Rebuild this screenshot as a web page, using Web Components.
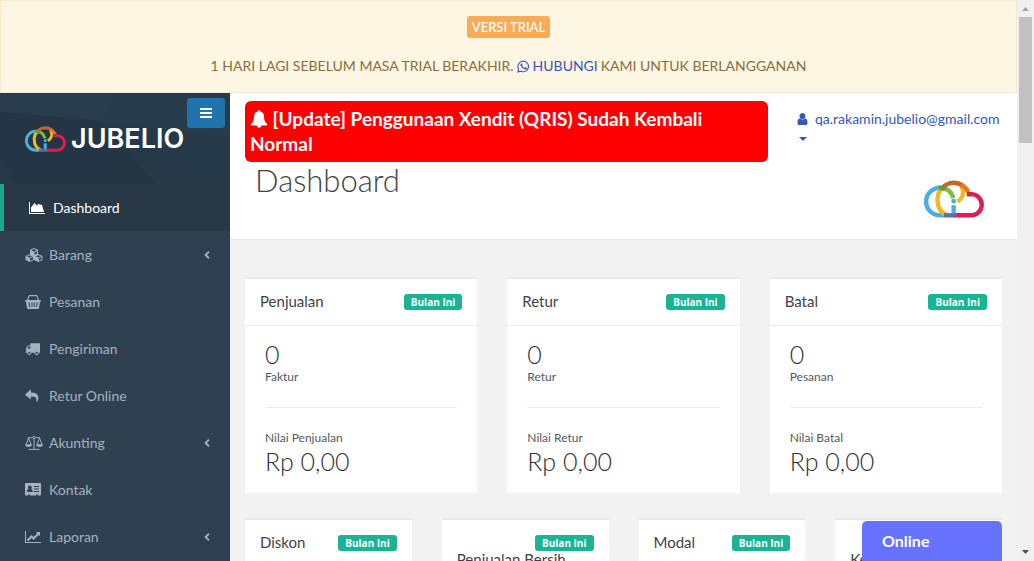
<!DOCTYPE html>
<html lang="id">
<head>
<meta charset="utf-8">
<meta name="viewport" content="width=device-width, initial-scale=1">
<title>Dashboard - Jubelio</title>
<style>
  html, body { margin: 0; height: 100%; overflow: hidden; }
  body { font: 14px/20px Lato, "Open Sans", sans-serif; color: #3f4245; background: #f2f2f2; }
</style>
</head>
<body>
<jb-app>
  <jb-trial-banner slot="banner"></jb-trial-banner>
  <jb-sidebar slot="sidebar">
    <jb-nav-item icon="area" active>Dashboard</jb-nav-item>
    <jb-nav-item icon="cubes" expandable>Barang</jb-nav-item>
    <jb-nav-item icon="basket">Pesanan</jb-nav-item>
    <jb-nav-item icon="truck">Pengiriman</jb-nav-item>
    <jb-nav-item icon="reply">Retur Online</jb-nav-item>
    <jb-nav-item icon="balance" expandable>Akunting</jb-nav-item>
    <jb-nav-item icon="card">Kontak</jb-nav-item>
    <jb-nav-item icon="line" expandable>Laporan</jb-nav-item>
  </jb-sidebar>
  <jb-page-header>Dashboard</jb-page-header>
  <jb-card-row columns="3">
    <jb-stat-card heading="Penjualan" count="0" unit="Faktur" label="Nilai Penjualan" amount="Rp 0,00"></jb-stat-card>
    <jb-stat-card heading="Retur" count="0" unit="Retur" label="Nilai Retur" amount="Rp 0,00"></jb-stat-card>
    <jb-stat-card heading="Batal" count="0" unit="Pesanan" label="Nilai Batal" amount="Rp 0,00"></jb-stat-card>
  </jb-card-row>
  <jb-card-row columns="4">
    <jb-stat-card heading="Diskon"></jb-stat-card>
    <jb-stat-card heading="Penjualan Bersih"></jb-stat-card>
    <jb-stat-card heading="Modal"></jb-stat-card>
    <jb-stat-card heading="Keuntungan Kotor"></jb-stat-card>
  </jb-card-row>
  <jb-scrollbar slot="scrollbar"></jb-scrollbar>
  <jb-chat slot="chat">Online</jb-chat>
</jb-app>

<script>
const ICONS = {
  area: ['0 0 2048 1792', '<path d="M2048 1536v128H0V128h128v1408h1920zM1664 512l256 896H256V832l448-576 320 320 192-192z"/>'],
  line: ['0 0 2048 1792', '<path d="M2048 1536v128H0V128h128v1408h1920zm-128-1248v435q0 21-19.5 29.5t-35.5-7.5l-121-121-633 633q-10 10-23 10t-23-10l-233-233-416 416-192-192 585-585q10-10 23-10t23 10l233 233 464-464-121-121q-16-16-7.5-35.5t29.5-19.5h435q14 0 23 9t9 23z"/>'],
  truck: ['0 0 1792 1792', '<path d="M640 1408q0-52-38-90t-90-38-90 38-38 90 38 90 90 38 90-38 38-90zm-384-512h384v-256h-158q-13 0-22 9l-195 195q-9 9-9 22v30zm1280 512q0-52-38-90t-90-38-90 38-38 90 38 90 90 38 90-38 38-90zm256-1088v1024q0 15-4 26.5t-13.5 18.5-16.5 11.5-23.5 6-22.5 2-25.5 0-22.5-.5q0 106-75 181t-181 75-181-75-75-181h-384q0 106-75 181t-181 75-181-75-75-181h-64q-3 0-22.5.5t-25.5 0-22.5-2-23.5-6-16.5-11.5-13.5-18.5-4-26.5q0-26 19-45t45-19v-320q0-8-.5-35t0-38 2.5-34.5 6.5-37 14-30.5 22.5-30l198-198q19-19 50.5-32t58.5-13h160v-192q0-26 19-45t45-19h1024q26 0 45 19t19 45z"/>'],
  user: ['200 150 1400 1600', '<path d="M1536 1399q0 109-62.500 187t-150.500 78h-854q-88 0-150.500-78t-62.500-187q0-85 8.500-160.500t31.500-152 58.500-131 94-89 134.500-34.500q131 128 313 128t313-128q76 0 134.500 34.500t94 89 58.500 131 31.500 152 8.500 160.500zm-256-887q0 159-112.500 271.500t-271.500 112.500-271.500-112.500-112.500-271.500 112.500-271.500 271.500-112.500 271.500 112.500 112.500 271.500z"/>'],
  reply: ['0 0 16 14', '<path d="M0.200 5.300 5.600.400Q6.300 0 6.300.900V3.200Q14 3 14.300 8.500 14.300 11 12.800 13.500 12.300 13.900 12.300 13.200 12.600 9 10.700 8.100 9.200 7.500 6.300 7.600V10Q6.300 10.800 5.600 10.300L.200 6Q-.100 5.600.200 5.300Z"/>'],
  cubes: ['0 0 18 14', '<path fill-rule="evenodd" d="M9 0 13 1.700V6L17.500 8V12L13.400 14 9 12 4.600 14 .500 12V8L5 6V1.700ZM9 1 6.300 2.200 9 3.400 11.700 2.200ZM9.500 4.300V6.700L12 5.600V3.200ZM4.500 7.200 2 8.300 4.500 9.400 7 8.300ZM5.100 10.300V12.800L8 11.500V9ZM13.400 7.200 10.800 8.300 13.400 9.400 16 8.300ZM13.900 10.300V12.800L16.500 11.500V9Z"/>'],
  basket: ['0 0 16 14', '<path fill-rule="evenodd" d="M2 5 3.300 1.200Q3.700 0 5 0H11Q12.300 0 12.700 1.200L14 5H15.200Q16 5 16 5.900T15.200 6.700H15L14 13.100Q13.900 14 13 14H3Q2.100 14 2 13.100L1 6.700H.800Q0 6.700 0 5.900T.800 5ZM3.300 5H12.700L11.700 1.600Q11.600 1.200 11 1.200H5Q4.400 1.200 4.300 1.600ZM3.600 7.500 4 12H5L4.600 7.500ZM6.500 7.500V12H7.500V7.500ZM8.800 7.500V12H9.800V7.500ZM11.500 7.500 11.200 12H12.200L12.600 7.500Z"/>'],
  balance: ['0 0 18 14', '<path fill="none" stroke="currentColor" stroke-width="1" d="M3 1.700H7.500M10.500 1.700H15M9 3V13M3.500 13.400H14.500M3.500 2 1 8.500M3.500 2 6 8.500M14.500 2 12 8.500M14.500 2 17 8.500"/><circle cx="9" cy="1.500" r="1.200" fill="none" stroke="currentColor"/><path d="M0 8.300H7Q6.700 10.900 3.500 10.900T0 8.300ZM11 8.300H18Q17.700 10.900 14.500 10.900T11 8.300Z"/>'],
  card: ['0 0 16 13', '<path fill-rule="evenodd" d="M1 0H15Q16 0 16 1V11.500Q16 12.500 15 12.500H13V11.500H11V12.500H5V11.500H3V12.500H1Q0 12.500 0 11.500V1Q0 0 1 0ZM4.800 2.500A1.900 2 0 0 0 3.500 5.900Q2 6.300 2 8.300V9H7.700V8.300Q7.700 6.300 6.200 5.900A1.900 2 0 0 0 4.800 2.500ZM9 3V4H14V3ZM9 5.500V6.500H14V5.500ZM9 8V9H14V8Z"/>'],
  bell: ['0 0 18 18', '<path d="M9 0Q10.200 0 10.200 1.500 14 2.200 14 7 14 12 17.500 14.200 17 15.500 16 15.500H11.300A2.300 2.300 0 0 1 6.700 15.500H2Q1 15.500.500 14.200 4 12 4 7 4 2.200 7.800 1.500 7.800 0 9 0Z"/>'],
  whatsapp: ['0 0 14 14', '<path fill="none" stroke="currentColor" stroke-width="1.200" stroke-linejoin="round" d="M1 13 1.800 9.900A5.700 5.700 0 1 1 4.200 12.100Z"/><path d="M4.600 3.700Q5.300 3.400 5.500 4L6 5.200Q6.100 5.600 5.500 6.200 6.300 7.800 8 8.500L8.700 7.700Q9 7.500 10.400 8.300 10.900 8.500 10.300 9.500 9.500 10.400 8.200 10 5 9 3.900 6.200 3.400 4.600 4.600 3.700Z"/>'],
  left: ['0 0 6 8', '<path fill="none" stroke="currentColor" stroke-width="1.800" d="M5 .700 1.600 4 5 7.300"/>'],
  bars: ['0 0 12 10', '<path d="M0 0H12V2H0ZM0 4H12V6H0ZM0 8H12V10H0Z"/>'],
  caret: ['0 0 8 4', '<path d="M0 0H8L4 4Z"/>'],
  up: ['0 0 7 4', '<path d="M0 4H7L3.500 0Z"/>'],
  down: ['0 0 7 4', '<path d="M0 0H7L3.500 4Z"/>'],
  cloud: ['434 270 178 113', `<g fill="none" stroke-width="13">
    <path stroke="#4baee2" d="M481 293A41 41 0 0 0 481 375H495"/>
    <path stroke="#ecbb20" d="M489 293Q474 306 474 328 474 364 503 375M545 289Q553 302 549 315 545 328 533 334"/>
    <path stroke="#7fbd42" d="M481 293Q513 294 521 324"/>
    <path stroke="#c4652c" d="M486 296Q500 279 522 278 537 278 549 287"/>
    <path stroke="#e4752a" d="M543 283Q559 292 566 306"/>
    <path stroke="#6d953b" d="M478 293Q491 293 497 298"/>
    <path stroke="#e01b57" d="M562 312H574A31.500 31.500 0 0 1 574 375H522"/>
    <path stroke="#4baee2" d="M522 345V375"/>
    <path stroke="#5a73a7" d="M493 375H528"/>
    <path stroke="#cf2730" d="M561 312H574"/></g>
    <circle cx="522" cy="333" r="7" fill="#4baee2"/>`]
};

const icon = (name, w, h) => {
  const [box, body] = ICONS[name];
  return `<svg aria-hidden="true" viewBox="${box}" width="${w}" height="${h}" fill="currentColor">${body}</svg>`;
};

class JbElement extends HTMLElement {
  connectedCallback() {
    if (this.shadowRoot) return;
    const tpl = document.createElement('template');
    tpl.innerHTML = `<style>:host,*{box-sizing:border-box}svg{display:block;flex:none}a{text-decoration:none}</style>` + this.render();
    this.attachShadow({ mode: 'open' }).append(tpl.content.cloneNode(true));
  }
}

customElements.define('jb-app', class extends JbElement {
  render() {
    return `<style>
      :host { display: grid; grid-template-columns: minmax(0, 1fr) auto; height: 100vh; overflow: hidden; }
      .view { overflow: hidden; }
      .body { display: grid; grid-template-columns: 230px minmax(0, 1fr); }
      main { padding-bottom: 40px; }
    </style>
    <div class="view">
      <slot name="banner"></slot>
      <div class="body"><slot name="sidebar"></slot><main><slot></slot></main></div>
    </div>
    <slot name="scrollbar"></slot><slot name="chat"></slot>`;
  }
});

customElements.define('jb-trial-banner', class extends JbElement {
  render() {
    return `<style>
      :host { display: flex; flex-direction: column; align-items: center; gap: 18px; padding: 15px 15px 16px;
        background: #fdf6e3; border: 1px solid #fbe8cc; color: #8a6d3b; }
      .tag { background: #f8ac59; color: #fff; border-radius: 3px; padding: 1px 5px; font-size: 13px; font-weight: 500; }
      p { margin: 0; display: flex; align-items: center; gap: 3px; white-space: nowrap; }
      a { color: #3557b7; display: inline-flex; align-items: center; gap: 3px; }
    </style>
    <span class="tag">VERSI TRIAL</span>
    <p>1 HARI LAGI SEBELUM MASA TRIAL BERAKHIR. <a href="#hubungi">${icon('whatsapp', 13, 13)}HUBUNGI</a> KAMI UNTUK BERLANGGANAN</p>`;
  }
});

customElements.define('jb-logo', class extends JbElement {
  render() {
    return `<style>
      :host { display: flex; align-items: center; gap: 5px; color: #fff; font: 600 27px/28px Inter, sans-serif; }
    </style>${icon('cloud', 41, 26)}<span>JUBELIO</span>`;
  }
});

customElements.define('jb-sidebar', class extends JbElement {
  render() {
    return `<style>
      :host { display: block; background: #2f4050; }
      header { position: relative; height: 91px; padding: 32px 25px 0; background: #263949; }
      .facets { position: absolute; inset: 0; width: 100%; height: 100%; }
      jb-logo { position: relative; }
      button { position: absolute; top: 5px; right: 5px; width: 38px; height: 30px; padding: 0; border: 0; border-radius: 3px;
        background: #2173ae; color: #fff; display: grid; place-items: center; }
      nav { display: block; }
    </style>
    <header>
      <svg class="facets" viewBox="0 0 230 91" preserveAspectRatio="none" aria-hidden="true">
        <path fill="#293c4b" d="M0 0H120L100 28 0 19Z"/><path fill="#243646" d="M0 19 100 28 15 91 0 62Z"/>
        <path fill="#283b4a" d="M120 0H230V45L100 28Z"/><path fill="#233646" d="M100 28 156 91H15Z"/><path fill="#273947" d="M218 91 220 40 230 45V91Z"/>
      </svg>
      <jb-logo></jb-logo>
      <button type="button" aria-label="Menu">${icon('bars', 12, 10)}</button>
    </header>
    <nav><slot></slot></nav>`;
  }
});

customElements.define('jb-nav-item', class extends JbElement {
  render() {
    const sizes = { area: [16, 14], line: [16, 14], truck: [15, 15], reply: [15, 14], cubes: [18, 14], basket: [16, 14], balance: [18, 14], card: [16, 13] };
    const name = this.getAttribute('icon');
    return `<style>
      :host { display: block; color: #a7b1c2; }
      :host([active]) { color: #fff; background: #293846; border-left: 4px solid #19aa8d; }
      a { display: flex; align-items: center; height: 47px; padding: 0 20px 0 25px; color: inherit; font-size: 14px; }
      i { flex: none; width: 24px; }
      .text { flex: 1; }
    </style>
    <a href="#"><i>${icon(name, ...sizes[name])}</i><span class="text"><slot></slot></span>${this.hasAttribute('expandable') ? icon('left', 6, 8) : ''}</a>`;
  }
});

customElements.define('jb-page-header', class extends JbElement {
  render() {
    return `<style>
      :host { display: flex; justify-content: space-between; padding: 8px 15px 0; height: 147px; background: #fff; border-bottom: 1px solid #e7eaec; }
      .left { flex: 0 1 523px; }
      .alert { display: block; padding: 5px; min-height: 61px; border-radius: 6px; background: #f00; color: #fff; font-size: 19px; line-height: 25px; font-weight: 700; }
      .alert svg { display: inline-block; vertical-align: -2px; }
      h2 { margin: 0 0 0 10px; font-size: 31px; line-height: 36px; font-weight: 300; color: #3f4245; }
      .right { flex: 0 0 205px; display: flex; flex-direction: column; align-items: flex-start; padding-top: 8px; }
      .account { display: grid; grid-template-columns: 18px auto; row-gap: 8px; align-items: center; color: #3557b7; }
      .cloud { align-self: flex-end; margin: 39px 18px 0 0; }
    </style>
    <div class="left">
      <div class="alert" role="alert">${icon('bell', 18, 18)} [Update] Penggunaan Xendit (QRIS) Sudah Kembali Normal</div>
      <h2><slot></slot></h2>
    </div>
    <div class="right">
      <a class="account" href="#akun">${icon('user', 11, 13)}<span>qa.rakamin.jubelio@gmail.com</span>${icon('caret', 12, 4)}</a>
      <div class="cloud">${icon('cloud', 60, 38)}</div>
    </div>`;
  }
});

customElements.define('jb-card-row', class extends JbElement {
  render() {
    return `<style>
      :host { display: grid; grid-template-columns: repeat(${this.getAttribute('columns')}, minmax(0, 1fr)); gap: 30px; padding: 0 15px; margin-top: 25px; }
      :host([columns="3"]) { margin-top: 37px; }
    </style><slot></slot>`;
  }
});

customElements.define('jb-stat-card', class extends JbElement {
  render() {
    const a = n => this.getAttribute(n) || '';
    const body = this.hasAttribute('amount') ? `<div class="body">
      <strong>${a('count')}</strong><small>${a('unit')}</small><hr><small>${a('label')}</small><strong>${a('amount')}</strong></div>` : '';
    return `<style>
      :host { display: block; background: #fff; border-top: 2px solid #e7eaec; }
      header { min-height: 47px; padding: 14px 15px; border-bottom: 1px solid #e7eaec; }
      header::after { content: ""; display: block; clear: both; }
      h5 { margin: 0; font-size: 15px; line-height: 16px; font-weight: 400; float: left; }
      .badge { float: right; margin-top: 1px; padding: 0 7px; height: 16px; border-radius: 3px; background: #1ab394; color: #fff;
        font: 700 10px/17px "Open Sans", sans-serif; }
      .body { padding: 15px 20px 19px; }
      strong { display: block; font-size: 25px; line-height: 26px; font-weight: 300; color: #2f3235; }
      small { display: block; font-size: 12px; line-height: 20px; color: #55585b; }
      hr { margin: 20px 0; border: 0; border-top: 1px solid #eee; }
    </style>
    <header><span class="badge">Bulan Ini</span><h5>${a('heading')}</h5></header>${body}`;
  }
});

customElements.define('jb-scrollbar', class extends JbElement {
  render() {
    return `<style>
      :host { display: flex; flex-direction: column; align-items: center; justify-content: space-between; width: 17px; height: 100vh; padding: 7px 2px; background: #f0f0f0; color: #a3a3a3; }
      .thumb { width: 13px; height: 126px; margin: 6px 0 auto; background: #c1c1c1; }
      .down { color: #505050; }
    </style>${icon('up', 7, 4)}<div class="thumb"></div><span class="down">${icon('down', 7, 4)}</span>`;
  }
});

customElements.define('jb-chat', class extends JbElement {
  render() {
    return `<style>
      :host { position: fixed; right: 32px; bottom: 0; width: 140px; }
      button { display: block; width: 100%; height: 40px; padding: 0 20px; border: 0; border-radius: 5px 5px 0 0; background: #6772ff; color: #fff;
        text-align: left; font: 700 16px/20px Lato, sans-serif; }
    </style><button type="button"><slot></slot></button>`;
  }
});
</script>
</body>
</html>
